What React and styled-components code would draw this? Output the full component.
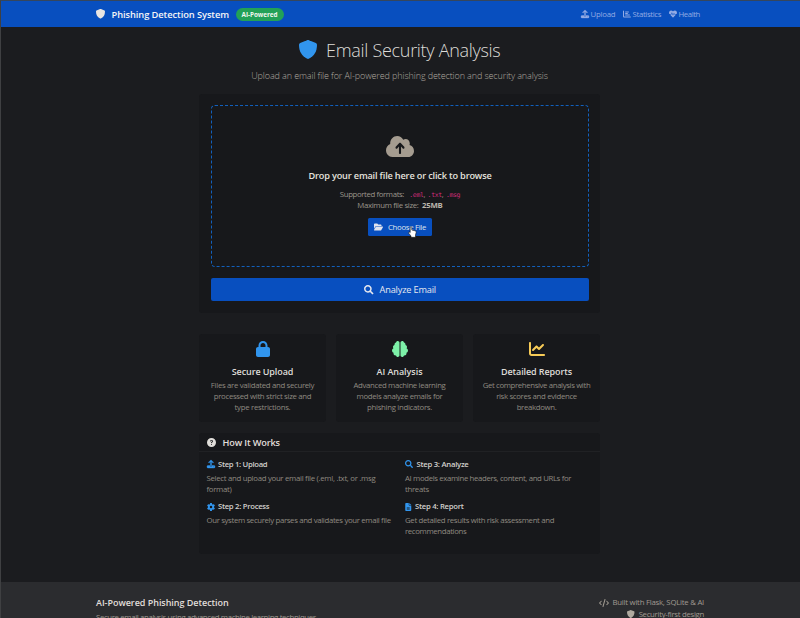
import React from 'react';
import styled, { createGlobalStyle } from 'styled-components';
import {
  FaUpload, FaChartBar, FaCloudArrowUp, FaFolderOpen,
  FaLock, FaBrain, FaChartLine, FaCircleQuestion, FaGear, FaFileLines, FaCode,
} from 'react-icons/fa6';
import { FaHeartbeat, FaSearch } from 'react-icons/fa';

const Global = createGlobalStyle`
  *, *::before, *::after { box-sizing: border-box; }
  html, body { margin: 0; padding: 0; background: #1b1c1f; overflow: hidden; }
`;

const Page = styled.div`
  width: 800px;
  height: 618px;
  overflow: hidden;
  display: flex;
  flex-direction: column;
  background: #1b1c1f;
  border-top: 1px solid #35465c;
  border-left: 1px solid #3f4042;
  color: #dcdad6;
  font-family: "Open Sans", "Noto Sans", sans-serif;
  font-size: 7.8px;
  line-height: 11px;
`;

const Text = styled.span`
  display: ${(p) => (p.$block ? 'block' : 'inline')};
  letter-spacing: ${(p) => p.$ls || 0}px;
  white-space: ${(p) => (p.$block ? 'nowrap' : 'pre')};
`;

const Glyph = styled.span`
  display: inline-flex;
  flex: none;
  width: ${(p) => p.$w}px;
  height: ${(p) => p.$h || p.$w}px;
  margin-right: ${(p) => p.$gap || 0}px;
  color: ${(p) => p.$color || 'inherit'};
  svg {
    width: 100%;
    height: 100%;
    display: block;
    overflow: visible;
    stroke: currentColor;
    stroke-width: ${(p) => p.$stroke || 0};
  }
`;

const Navbar = styled.header`
  flex: none;
  height: 26px;
  padding: 0 100px 0 95px;
  display: flex;
  align-items: center;
  background: #084fbf;
`;

const Brand = styled.div`
  display: flex;
  align-items: center;
  font-size: 9.3px;
  font-weight: 600;
  color: #f4f4f6;
`;

const Badge = styled.span`
  margin: 1px 0 0 6.5px;
  width: 48px;
  height: 13px;
  display: flex;
  align-items: center;
  justify-content: center;
  border-radius: 7px;
  background: #22a157;
  color: #eef6ee;
  font-size: 6.4px;
  font-weight: 700;
`;

const NavLinks = styled.nav`
  margin-left: auto;
  display: flex;
  gap: 7.5px;
`;

const NavLink = styled.a`
  display: flex;
  align-items: center;
  color: #93abe4;
`;

const Main = styled.main`
  flex: none;
  width: 401px;
  margin-left: 198px;
  height: 555px;
`;

const Title = styled.h1`
  margin: 0;
  padding-top: 6px;
  height: 39px;
  display: flex;
  align-items: center;
  justify-content: center;
  font-size: 18px;
  line-height: 30px;
  font-weight: 300;
  color: #dedcd8;
`;

const Lead = styled.p`
  margin: 0;
  height: 28px;
  padding-top: 2.5px;
  text-align: center;
  font-size: 9px;
  line-height: 14px;
  font-weight: 300;
  color: #b0aaa0;
`;

const Card = styled.section`
  background: #17181b;
  border-radius: 3px;
`;

const UploadCard = styled(Card)`
  height: 219px;
  padding: 11px 11px 0 12px;
`;

const DropZone = styled.div`
  height: 162px;
  padding-top: 30px;
  display: flex;
  flex-direction: column;
  align-items: center;
  border: 1px dashed #1260bd;
  border-radius: 4px;
  color: #9c968c;
`;

const DropTitle = styled.h2`
  margin: 12px 0 6px;
  font-size: 9.2px;
  line-height: 14px;
  font-weight: 600;
  color: #e4e2de;
`;

const Line = styled.div`
  display: flex;
  height: 11px;
  white-space: pre;
`;

const Code = styled.code`
  color: #d02c7a;
  font: 6.5px/12px "DejaVu Sans Mono", monospace;
  letter-spacing: -0.35px;
`;

const Strong = styled.strong`
  color: #bab5ac;
  font-weight: 700;
  letter-spacing: -0.2px;
`;

const ChooseButton = styled.button`
  position: relative;
  margin: 7px 0 0;
  padding: 0 0 0 5.5px;
  width: 64px;
  height: 18px;
  display: flex;
  align-items: center;
  border: 0;
  border-radius: 1.5px;
  background: #084fbf;
  color: #dfe3ee;
  font: inherit;
`;

const Pointer = styled.svg`
  position: absolute;
  left: 40px;
  top: 8px;
  width: 9px;
  height: 12px;
`;

const AnalyzeButton = styled.button`
  margin-top: 11px;
  padding: 1px 0 0;
  width: 100%;
  height: 22.5px;
  display: flex;
  align-items: center;
  justify-content: center;
  border: 0;
  border-radius: 2px;
  background: #084fbf;
  color: #e6e8f0;
  font: 400 9.2px/14px "Open Sans", sans-serif;
`;

const Features = styled.div`
  margin-top: 21px;
  display: grid;
  grid-template-columns: repeat(3, 1fr);
  gap: 10px;
`;

const FeatureCard = styled(Card)`
  height: 88px;
  padding-top: 7px;
  display: flex;
  flex-direction: column;
  align-items: center;
  text-align: center;
`;

const FeatureTitle = styled.h3`
  margin: 8px 0 2px;
  font-size: 9px;
  line-height: 13px;
  font-weight: 600;
  color: #dedcd8;
`;

const Muted = styled.p`
  margin: 0;
  color: #8f8a81;
  line-height: 11.2px;
`;

const HowCard = styled(Card)`
  margin-top: 10.5px;
  height: 121px;
`;

const HowHeader = styled.div`
  height: 19.5px;
  padding: 1px 0 0 8px;
  display: flex;
  align-items: center;
  border-bottom: 1px solid #202124;
  font-size: 9.2px;
  color: #e0deda;
  font-weight: 600;
`;

const Steps = styled.div`
  padding: 6.5px 0 0 7.5px;
  display: grid;
  grid-template-columns: 198.5px 1fr;
  grid-auto-rows: 42.7px;
`;

const StepTitle = styled.h4`
  margin: 0 0 3px;
  height: 11px;
  display: flex;
  align-items: center;
  font-size: 7.7px;
  font-weight: 600;
  color: #d2d0cc;
`;

const Footer = styled.footer`
  flex: none;
  height: 60px;
  padding: 15px 96px 0 95px;
  display: flex;
  justify-content: space-between;
  background: #2b2c2f;
  color: #a09a91;
`;

const FooterTitle = styled.h5`
  margin: 0 0 3px;
  font-size: 9px;
  line-height: 12px;
  font-weight: 600;
  color: #e0deda;
`;

const FooterRight = styled.div`
  display: flex;
  flex-direction: column;
  align-items: flex-end;
`;

const FooterItem = styled.div`
  display: flex;
  align-items: center;
  height: 11.5px;
`;

function Shield() {
  return (
    <svg viewBox="0 0 18 19" fill="currentColor" aria-hidden="true">
      <path d="M9 0 C9.4 0 9.7.1 10 .2 L16.9 3.1 C17.6 3.4 18 4 18 4.8 C18 11 15.5 16 9.8 18.8 C9.3 19 8.7 19 8.2 18.8 C2.5 16 0 11 0 4.8 C0 4 .4 3.4 1.1 3.1 L8 .2 C8.3.1 8.6 0 9 0Z" />
    </svg>
  );
}

const blue = '#3195ee';

const features = [
  { icon: <FaLock />, color: blue, w: 14, title: 'Secure Upload', ls: -0.1,
    lines: [['Files are validated and securely', -0.31], ['processed with strict size and', -0.31], ['type restrictions.', -0.28]] },
  { icon: <FaBrain />, color: '#7df0a8', w: 16, title: 'AI Analysis', ls: -0.05,
    lines: [['Advanced machine learning', -0.34], ['models analyze emails for', -0.34], ['phishing indicators.', -0.31]] },
  { icon: <FaChartLine />, color: '#f7cb57', w: 16, title: 'Detailed Reports', ls: -0.09,
    lines: [['Get comprehensive analysis with', -0.37], ['risk scores and evidence', -0.33], ['breakdown.', -0.34]] },
];

const steps = [
  { icon: <FaUpload />, w: 8, stroke: 24, title: 'Step 1: Upload', ls: -0.3, lines: [['Select and upload your email file (.eml, .txt, or .msg', -0.3], ['format)', -0.3]] },
  { icon: <FaSearch />, w: 8, title: 'Step 3: Analyze', ls: -0.25, lines: [['AI models examine headers, content, and URLs for', -0.36], ['threats', -0.3]] },
  { icon: <FaGear />, w: 8, title: 'Step 2: Process', ls: -0.28, lines: [['Our system securely parses and validates your email file', -0.345]] },
  { icon: <FaFileLines />, w: 6.5, title: 'Step 4: Report', ls: -0.26, lines: [['Get detailed results with risk assessment and', -0.33], ['recommendations', -0.35]] },
];

const links = [
  { icon: <FaUpload />, stroke: 20, label: 'Upload', ls: -0.26 },
  { icon: <FaChartBar />, label: 'Statistics', ls: -0.35 },
  { icon: <FaHeartbeat />, label: 'Health', ls: -0.4 },
];

function Lines({ lines }) {
  return (
    <Muted>
      {lines.map(([t, ls]) => <Text key={t} $block $ls={ls}>{t}</Text>)}
    </Muted>
  );
}

export default function App() {
  return (
    <Page>
      <Global />
      <Navbar>
        <Brand>
          <Glyph $w={9} $h={9.5} $gap={6.5} $color="#e9e5e2"><Shield /></Glyph>
          <Text $ls={-0.07}>Phishing Detection System</Text>
          <Badge><Text $ls={-0.06}>AI-Powered</Text></Badge>
        </Brand>
        <NavLinks>
          {links.map((l) => (
            <NavLink key={l.label}>
              <Glyph $w={8} $gap={1.8} $stroke={l.stroke}>{l.icon}</Glyph>
              <Text $ls={l.ls}>{l.label}</Text>
            </NavLink>
          ))}
        </NavLinks>
      </Navbar>

      <Main>
        <Title>
          <Glyph $w={18} $h={19} $gap={9.5} $color={blue}><Shield /></Glyph>
          <Text $ls={-0.3}>Email Security Analysis</Text>
        </Title>
        <Lead><Text $ls={-0.108}>Upload an email file for AI-powered phishing detection and security analysis</Text></Lead>

        <UploadCard>
          <DropZone>
            <Glyph $w={28} $h={21} $color="#a59c90">
              <FaCloudArrowUp viewBox="0 32 640 448" preserveAspectRatio="none" />
            </Glyph>
            <DropTitle><Text $ls={-0.177}>Drop your email file here or click to browse</Text></DropTitle>
            <Line>
              <Text $ls={-0.38}>Supported formats: </Text>
              <Code> .eml</Code>, <Code>.txt</Code>, <Code>.msg</Code>
            </Line>
            <Line>
              <Text $ls={-0.35}>Maximum file size: </Text>
              <Strong> 25MB</Strong>
            </Line>
            <ChooseButton>
              <Glyph $w={9} $h={8} $gap={5.5}><FaFolderOpen /></Glyph>
              <Text $ls={-0.32}>Choose File</Text>
              <Pointer viewBox="0 0 9 12">
                <path d="M2.2 1 Q3.3.2 3.8 1.3 V4 L7.2 4.8 Q8.3 5.1 8.2 6.3 L7.5 9 V11.3 H3 V10 L.7 7.2 Q.4 6 1.5 6 L2.2 6.6Z" fill="#fff" stroke="#111" strokeWidth=".6" />
              </Pointer>
            </ChooseButton>
          </DropZone>
          <AnalyzeButton>
            <Glyph $w={9.5} $gap={6}><FaSearch /></Glyph>
            <Text $ls={-0.18}>Analyze Email</Text>
          </AnalyzeButton>
        </UploadCard>

        <Features>
          {features.map((f) => (
            <FeatureCard key={f.title}>
              <Glyph $w={f.w} $h={16} $color={f.color}>{f.icon}</Glyph>
              <FeatureTitle><Text $ls={f.ls}>{f.title}</Text></FeatureTitle>
              <Lines lines={f.lines} />
            </FeatureCard>
          ))}
        </Features>

        <HowCard>
          <HowHeader>
            <Glyph $w={9} $gap={6.5}><FaCircleQuestion /></Glyph>
            <Text $ls={-0.15}>How It Works</Text>
          </HowHeader>
          <Steps>
            {steps.map((s) => (
              <div key={s.title}>
                <StepTitle>
                  <Glyph $w={s.w} $h={8} $gap={3.5} $color={blue} $stroke={s.stroke}>{s.icon}</Glyph>
                  <Text $ls={s.ls}>{s.title}</Text>
                </StepTitle>
                <Lines lines={s.lines} />
              </div>
            ))}
          </Steps>
        </HowCard>
      </Main>

      <Footer>
        <div>
          <FooterTitle><Text $ls={-0.04}>AI-Powered Phishing Detection</Text></FooterTitle>
          <Text $ls={-0.355}>Secure email analysis using advanced machine learning techniques</Text>
        </div>
        <FooterRight>
          <FooterItem>
            <Glyph $w={10} $h={8} $gap={3.5}><FaCode /></Glyph>
            <Text $ls={-0.25}>Built with Flask, SQLite &amp; AI</Text>
          </FooterItem>
          <FooterItem>
            <Glyph $w={7.5} $h={8} $gap={4} $color="#b0aaa0"><Shield /></Glyph>
            <Text $ls={-0.3}>Security-first design</Text>
          </FooterItem>
        </FooterRight>
      </Footer>
    </Page>
  );
}
